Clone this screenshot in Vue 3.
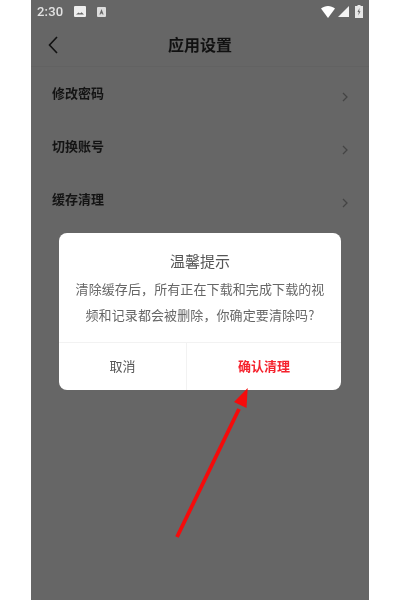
<script setup>
const rows = ['修改密码', '切换账号', '缓存清理']
</script>

<template>
  <div class="page">
    <div class="phone">
      <div class="status">
        <span class="time">2:30</span>
        <svg class="ic-img" viewBox="0 0 12 11"><path fill-rule="evenodd" d="M1 0h10a1 1 0 0 1 1 1v9a1 1 0 0 1-1 1H1a1 1 0 0 1-1-1V1a1 1 0 0 1 1-1zM2 8.500h8L7.600 6.200 6 7.600 4.600 6.600z" fill="#eee"/></svg>
        <svg class="ic-a" viewBox="0 0 9 10"><path fill-rule="evenodd" d="M1 0h7a1 1 0 0 1 1 1v8a1 1 0 0 1-1 1H1a1 1 0 0 1-1-1V1a1 1 0 0 1 1-1zM4.500 2 2.400 7.600h1.100l.4-1.100h1.200l.4 1.100h1.100z" fill="#ddd"/></svg>
        <span class="spacer"></span>
        <svg class="ic-wifi" viewBox="0 0 14 12"><path d="M0 2.600C4-.8 10-.8 14 2.600L7 12z" fill="#fff"/></svg>
        <svg class="ic-signal" viewBox="0 0 11 11"><path d="M11 0v11H0z" fill="#f2f2f2"/></svg>
        <svg class="ic-batt" viewBox="0 0 8 13"><path fill-rule="evenodd" d="M2.500 0h3v1H8v12H0V1h2.500zM4.500 3 2.500 7h1.300L3.300 10.500l2.200-4.300H4.200z" fill="#e8e8e8"/></svg>
      </div>
      <header class="head">
        <svg class="back" viewBox="0 0 10 18"><path d="M9 1 1.500 9 9 17" fill="none" stroke="#111" stroke-width="1.600"/></svg>
        <span class="title">应用设置</span>
      </header>
      <div class="row" v-for="r in rows" :key="r">
        <span class="label">{{ r }}</span>
        <svg class="chev" viewBox="0 0 6 10"><path d="M1 1l4 4-4 4" fill="none" stroke="#444" stroke-width="1.300"/></svg>
      </div>

      <div class="dialog">
        <div class="d-title">温馨提示</div>
        <div class="d-body">清除缓存后，所有正在下载和完成下载的视<br>频和记录都会被删除，你确定要清除吗?</div>
        <div class="d-actions">
          <div class="cancel">取消</div>
          <div class="confirm">确认清理</div>
        </div>
      </div>

      <svg class="arrow" viewBox="0 0 120 170">
        <path d="M35 165 L97 37" fill="none" stroke="#f50b0b" stroke-width="3.800"/>
        <path d="M105.700 16 L92 30 L104.500 36 Z" fill="#f50b0b"/>
      </svg>
    </div>
  </div>
</template>

<style scoped>
.page {
  width: 400px;
  height: 600px;
  background: #fff;
  display: flex;
  justify-content: center;
  font-family: "Noto Sans CJK SC", "Noto Sans", sans-serif;
}
.phone {
  position: relative;
  width: 338px;
  height: 600px;
  background: #666;
  overflow: hidden;
  filter: blur(0.45px);
}
.status {
  height: 23px;
  display: flex;
  align-items: center;
  padding: 0 6px;
}
.time {
  font-family: Roboto, sans-serif;
  font-size: 13px;
  font-weight: 500;
  color: #e2e2e2;
  letter-spacing: 0.2px;
}
.ic-img { width: 12px; height: 11px; margin-left: 11px; }
.ic-a { width: 9px; height: 10px; margin-left: 11px; }
.spacer { flex: 1; }
.ic-wifi { width: 14px; height: 12px; }
.ic-signal { width: 11px; height: 11px; margin-left: 3px; }
.ic-batt { width: 8px; height: 13px; margin-left: 6px; }
.head {
  height: 44px;
  position: relative;
  display: flex;
  align-items: center;
  justify-content: center;
  border-bottom: 1px solid #626262;
  box-sizing: border-box;
  padding-bottom: 2px;
}
.back {
  position: absolute;
  left: 17px;
  top: 13px;
  width: 10px;
  height: 18px;
}
.title {
  font-size: 16px;
  font-weight: 700;
  color: #111;
}
.row {
  height: 53px;
  display: flex;
  padding: 17px 21px 0;
  box-sizing: border-box;
  justify-content: space-between;
}
.label {
  font-size: 13px;
  line-height: 18px;
  font-weight: 700;
  color: #141414;
}
.chev {
  width: 6px;
  height: 10px;
  margin-top: 8px;
}
.dialog {
  position: absolute;
  left: 28px;
  top: 233px;
  width: 282px;
  height: 157px;
  background: #fff;
  border-radius: 8px;
  display: flex;
  flex-direction: column;
  overflow: hidden;
}
.d-title {
  margin-top: 17px;
  text-align: center;
  font-size: 15px;
  line-height: 22px;
  color: #555;
}
.d-body {
  margin-top: 4px;
  height: 52px;
  text-align: center;
  font-size: 13px;
  letter-spacing: 0.1px;
  line-height: 26px;
  color: #666;
  white-space: nowrap;
}
.d-actions {
  margin-top: 14px;
  flex: 1;
  display: flex;
  border-top: 1px solid #f2f2f2;
  font-size: 13px;
}
.cancel {
  width: 127px;
  display: flex;
  align-items: center;
  justify-content: center;
  color: #555;
  border-right: 1px solid #f2f2f2;
  padding-bottom: 2px;
}
.confirm {
  flex: 1;
  display: flex;
  align-items: center;
  justify-content: center;
  color: #f5222d;
  font-weight: 700;
  padding-bottom: 2px;
}
.arrow {
  position: absolute;
  left: 111px;
  top: 372px;
  width: 120px;
  height: 170px;
}
</style>
